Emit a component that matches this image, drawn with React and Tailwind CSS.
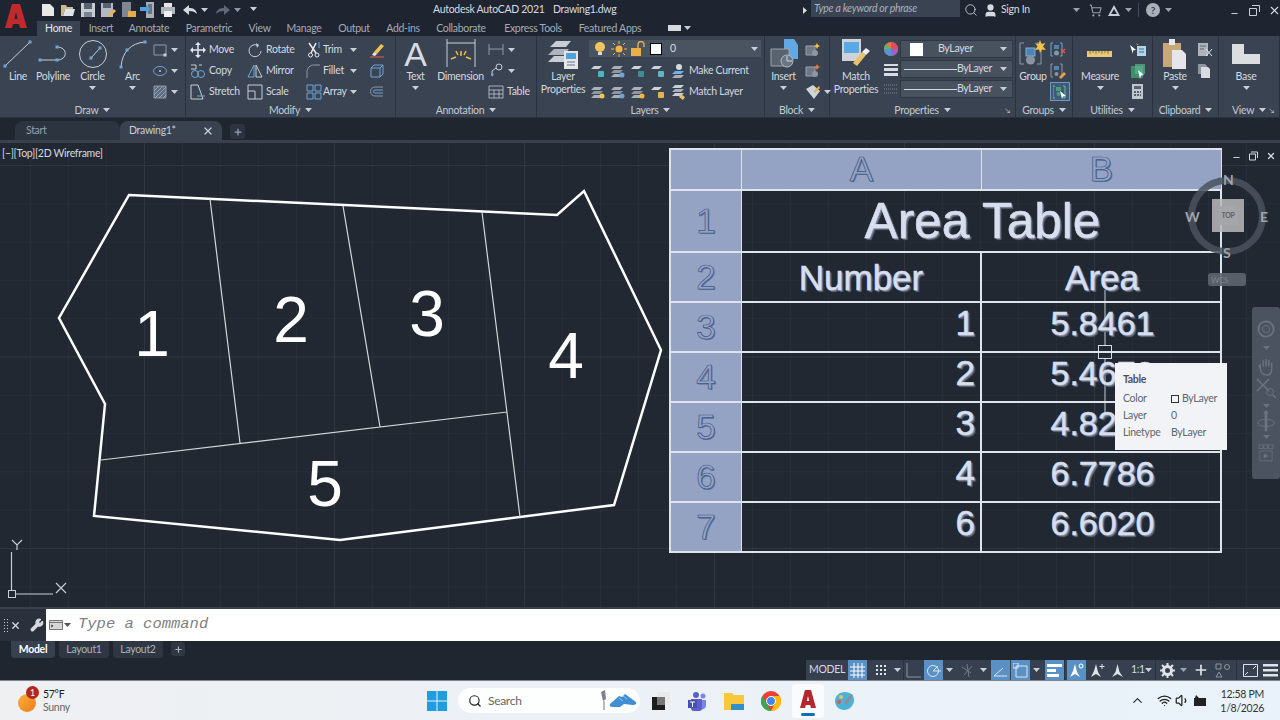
import { Search, User, ShoppingCart, Minus, X, Plus, ChevronUp, Wifi, Volume1, Wrench } from "lucide-react";

const LIGHT = "#c8cfd9";
const BLUE = "#6ea6d8";

function Svg({ w = 16, h = 16, children }) {
  return (
    <svg width={w} height={h} viewBox={`0 0 ${w} ${h}`} className="shrink-0" fill="none">
      {children}
    </svg>
  );
}

function Caret({ color = "#c8cfd9" }) {
  return (
    <svg width="7" height="4" viewBox="0 0 7 4" className="shrink-0">
      <path d="M0 0h7L3.5 4z" fill={color} />
    </svg>
  );
}

/* ---------- quick access icons ---------- */
const NewFile = () => <Svg><path d="M2 2h8l4 4v8H2z" fill="#e8e8e8" /></Svg>;
const OpenFile = () => <Svg><path d="M1 3h5l1 2h6v2H5l-2 7H1z" fill="#c9b98e" /><path d="M5 7h10l-2 7H3z" fill="#dfe3e8" /></Svg>;
const SaveFile = () => <Svg><path d="M1 1h14v14H1z" fill="#c7ccd3" /><path d="M4 1h8v6H4z" fill="#596272" /><path d="M4 10h8v5H4z" fill="#7b8492" /></Svg>;
const SaveAs = () => <Svg><path d="M1 1h12v14H1z" fill="#b4bac3" /><path d="M3 1h8v5H3z" fill="#596272" /><path d="M8 13l6-6 2 2-6 6H8z" fill="#e6b35a" /></Svg>;
const SheetOpen = () => <Svg><path d="M2 0h9v15H2z" fill="#7e8793" /><path d="M8 9h8v6H8z" fill="#e3ac4c" /></Svg>;
const SheetArrow = () => <Svg><path d="M6 0h8v16H6z" fill="#a8afb9" /><path d="M8 2h4v10H8z" fill="#6b7482" /><path d="M0 5h6V2l4 5-4 5V9H0z" fill="#4fa3dd" /></Svg>;
const PrintIcon = () => <Svg><path d="M4 1h8v4H4z" fill="#e6e6e6" /><path d="M1 5h14v7H1z" fill="#aeb5bf" /><path d="M4 9h8v6H4z" fill="#f0f0f0" /></Svg>;
const Undo = ({ color }) => <Svg w={14} h={12}><path d="M0 6l6-5v3c4 0 7 1 8 6-2-2-4-3-8-3v4z" fill={color} /></Svg>;
const Redo = ({ color }) => <Svg w={14} h={12}><path d="M14 6L8 1v3C4 4 1 5 0 10c2-2 4-3 8-3v4z" fill={color} /></Svg>;

/* ---------- draw panel ---------- */
const Dot = ({ x, y, c = BLUE }) => <rect x={x - 1.5} y={y - 1.5} width="3" height="3" fill={c} />;
const LineIcon = () => <Svg w={30} h={30}><path d="M2 27L27 3" stroke={LIGHT} /><Dot x={2} y={27} /><Dot x={27} y={3} /></Svg>;
const PolylineIcon = () => <Svg w={30} h={30}><path d="M2 21h17c11 0 11-13 0-13" stroke={LIGHT} /><Dot x={2} y={21} /><Dot x={19} y={21} /><Dot x={19} y={8} /></Svg>;
const CircleIcon = () => <Svg w={30} h={30}><circle cx="15" cy="15" r="13.5" stroke={LIGHT} /><path d="M13 19L22 9" stroke={LIGHT} /><Dot x={13} y={19} /><Dot x={22} y={9} /></Svg>;
const ArcIcon = () => <Svg w={28} h={30}><path d="M2 28C3 13 12 4 26 3" stroke={LIGHT} /><Dot x={2} y={28} /><Dot x={8} y={11} /><Dot x={26} y={3} /></Svg>;
const RectIcon = () => <Svg><path d="M2 3h12v10H2z" stroke="#8f99a6" /><Dot x={13} y={13} c={LIGHT} /></Svg>;
const EllipseIcon = () => <Svg><ellipse cx="8" cy="8" rx="6.5" ry="4.5" stroke={BLUE} /><circle cx="8" cy="8" r="1" fill={LIGHT} /></Svg>;
const HatchIcon = () => (
  <Svg>
    <path d="M2 2h12v12H2z" fill="#5b6c80" stroke="#8f99a6" />
    <path d="M2 7l5-5M2 11l9-9M3 14L14 3M7 14l7-7M11 14l3-3" stroke="#9aa6b5" />
  </Svg>
);

/* ---------- modify panel ---------- */
const MoveIcon = () => <Svg><path d="M8 1v14M1 8h14" stroke="#e4e8ee" strokeWidth="1.5" /><path d="M8 0l3 3H5zM8 16l-3-3h6zM0 8l3-3v6zM16 8l-3 3V5z" fill="#e4e8ee" /></Svg>;
const CopyIcon = () => <Svg><circle cx="5" cy="11" r="3.5" stroke={BLUE} /><circle cx="11" cy="11" r="3.5" stroke={BLUE} /><path d="M1 2h5v4H1" stroke={LIGHT} /><path d="M9 2h3" stroke={LIGHT} /></Svg>;
const StretchIcon = () => <Svg><path d="M1 1h7l5 14H1z" stroke={LIGHT} /><path d="M7 12h8" stroke={BLUE} /></Svg>;
const RotateIcon = () => <Svg><path d="M11 3.5A6 6 0 1 0 14 9" stroke={LIGHT} /><path d="M9 1l3 2-2 3z" fill={LIGHT} /></Svg>;
const MirrorIcon = () => <Svg><path d="M7 2L1 14h6z" stroke={BLUE} /><path d="M9 2l6 12H9z" stroke={LIGHT} /></Svg>;
const ScaleIcon = () => <Svg><path d="M1 1h14v14H1z" stroke={LIGHT} /><path d="M1 7h7v8" stroke={LIGHT} /></Svg>;
const TrimIcon = () => <Svg><path d="M3 1l7 10M10 1L5 11" stroke="#e4e8ee" strokeWidth="1.6" /><circle cx="4.5" cy="13" r="2" stroke="#e4e8ee" /><circle cx="11" cy="13" r="2" stroke="#e4e8ee" /><path d="M13 0v6" stroke={BLUE} /></Svg>;
const FilletIcon = () => <Svg><path d="M1 15V9c0-4 3-7 7-7h6" stroke="#8f99a6" /></Svg>;
const ArrayIcon = () => <Svg><path d="M1 1h6v6H1zM9 1h6v6H9zM1 9h6v6H1zM9 9h6v6H9z" stroke={BLUE} /></Svg>;
const EraseIcon = () => <Svg><path d="M5 10l7-8 3 2-7 8z" fill="#f0c058" /><path d="M5 10l3 2-2 2-3-1z" fill="#e6e6e6" /><path d="M1 15h14" stroke="#e0604e" /></Svg>;
const Explode = () => <Svg><path d="M2 5h9v9H2z" stroke={BLUE} /><path d="M2 5l3-3h9v9l-3 3M11 5l3-3" stroke={BLUE} /></Svg>;
const Offset = () => <Svg><path d="M14 3H6a4 4 0 0 0 0 9h8" stroke="#8f99a6" /><path d="M14 6H6a1.5 1.5 0 0 0 0 3h8" stroke={BLUE} /></Svg>;

/* ---------- annotation ---------- */
const DimensionIcon = () => (
  <Svg w={30} h={30}>
    <path d="M1 0v28M29 0v28M1 4h28" stroke={LIGHT} />
    <path d="M5 20l5-2M25 20l-5-2M15 12v5M10 12l2 4M20 12l-2 4" stroke="#e9b949" strokeWidth="1.6" />
  </Svg>
);
const LinearIcon = () => <Svg><path d="M1 2v11M15 2v11M1 7h14" stroke="#8f99a6" /></Svg>;
const LeaderIcon = () => <Svg><circle cx="11" cy="4" r="3" stroke={LIGHT} /><path d="M8 5l-4 3v5" stroke={LIGHT} /><path d="M3 10l1 4 2-3z" fill={BLUE} /></Svg>;
const TableIcon = () => <Svg><path d="M1 2h14v12H1zM1 6h14M1 10h14M6 6v8M11 6v8" stroke="#aab2bd" /></Svg>;

/* ---------- layers ---------- */
function LayerStack({ badge }) {
  return (
    <Svg w={14} h={14}>
      <path d="M3 2h9L9 5H0z" fill="#a9b0ba" />
      <path d="M3 6h9L9 9H0z" fill="#8d96a2" />
      <path d="M3 10h9l-3 3H0z" fill="#a9b0ba" />
      {badge && <circle cx="11" cy="11" r="2.5" fill={badge} />}
    </Svg>
  );
}
function LayerFlat({ badge }) {
  return (
    <Svg w={14} h={14}>
      <path d="M3 2h8L8 5H0z" fill="#cfd4da" />
      <rect x="7" y="7" width="6" height="6" rx="1" fill={badge} />
    </Svg>
  );
}
const LayerPropsIcon = () => (
  <Svg w={32} h={30}>
    <path d="M9 2h15l-5 6H3z" fill="#c9ced5" />
    <path d="M7 10h15l-5 6H1z" fill="#aeb4bd" />
    <path d="M7 17h15l-5 6H1z" fill="#c9ced5" />
    <path d="M17 12h14v18H17z" fill="#e4e6ea" />
    <path d="M19 14h10v6H19z" fill="#4fa3dd" />
    <path d="M20 23h8M20 26h8" stroke="#6b7482" />
  </Svg>
);
const Bulb = () => <Svg><circle cx="8" cy="6" r="5" fill="#f2c65a" /><path d="M6 11h4v3H6z" fill="#d9d9d9" /></Svg>;
const Sun = () => <Svg><circle cx="8" cy="8" r="3.5" fill="#f2b844" /><path d="M8 0v3M8 13v3M0 8h3M13 8h3M2 2l2 2M12 12l2 2M14 2l-2 2M2 14l2-2" stroke="#f2b844" /></Svg>;
const Lock = () => <Svg><rect x="1" y="7" width="10" height="8" fill="#e9b04a" /><path d="M8 7V3.5a3 3 0 0 1 6 0V6" stroke="#e9b04a" strokeWidth="1.4" /></Svg>;
const MakeCurrent = () => <Svg><path d="M4 8h9l-3 3H1z" fill="#6fb2e3" /><path d="M4 12h9l-3 3H1z" fill="#a9b0ba" /><circle cx="8" cy="4" r="3" fill="#d6dae0" /></Svg>;
const MatchLayer = () => <Svg><path d="M4 1h9l-3 3H1z" fill="#c9ced5" /><path d="M4 5h9l-3 3H1z" fill="#a9b0ba" /><path d="M4 9h9l-3 3H1z" fill="#c9ced5" /><path d="M10 10l4 3-2 3-4-3z" fill="#e9c26a" /></Svg>;

/* ---------- block ---------- */
const InsertIcon = () => (
  <Svg w={28} h={30}>
    <path d="M14 0h10l4 6v14H14z" fill="#62a9e4" />
    <path d="M1 10h18v17H1z" fill="#59626f" stroke="#9aa2ad" />
    <circle cx="17" cy="22" r="6" fill="#6b7482" stroke="#b5bcc6" />
    <path d="M17 22v-5M17 22h5" stroke="#cfd4da" />
  </Svg>
);
const BlockSmall = ({ accent }) => <Svg><path d="M1 4h9v9H1z" fill="#6f7886" stroke="#9aa2ad" /><circle cx="10" cy="11" r="3" fill="#8d96a2" /><path d="M12 1l1 2 2 1-2 1-1 2-1-2-2-1 2-1z" fill={accent} /></Svg>;
const BlockEdit = () => <Svg><path d="M1 5l7-4 7 6-6 8z" fill="#cfd4da" /><path d="M9 7l5-5 1 2-5 5z" fill="#e9b04a" /></Svg>;

/* ---------- properties ---------- */
const MatchPropsIcon = () => (
  <Svg w={30} h={30}>
    <path d="M1 0h19v22H1z" fill="#cfd3d9" />
    <path d="M3 3h15v11H3z" fill="#5aa9e6" />
    <path d="M12 24l9-11 4 3-9 11z" fill="#e9c26a" />
    <path d="M21 13l4-4 4 3-4 4z" fill="#f0f0f0" />
  </Svg>
);
const ColorWheel = () => (
  <svg width="14" height="14" viewBox="0 0 14 14" className="shrink-0">
    <circle cx="7" cy="7" r="7" fill="#e8763a" />
    <path d="M7 7V0a7 7 0 0 1 7 7z" fill="#e24a5f" />
    <path d="M7 7h7a7 7 0 0 1-7 7z" fill="#9a63c9" />
    <path d="M7 7v7a7 7 0 0 1-7-7z" fill="#4a9ad9" />
    <path d="M7 7H0a7 7 0 0 1 2-5z" fill="#58b56c" />
  </svg>
);
const LineweightIcon = () => <Svg w={14} h={14}><path d="M0 2h14v2H0zM0 6h14v3H0zM0 11h14v3H0z" fill="#d8dce2" /></Svg>;
const LinetypeIcon = () => <Svg w={14} h={14}><path d="M0 3h14M0 7h14M0 11h14" stroke="#7d8692" strokeDasharray="1 1" /></Svg>;

/* ---------- groups / utilities / clipboard ---------- */
const GroupIcon = () => (
  <Svg w={28} h={28}>
    <path d="M5 3H1v21h4M18 3h4v21h-4" stroke="#8f99a6" />
    <rect x="7" y="8" width="9" height="8" fill="#4f83b4" stroke="#7fb0dc" />
    <circle cx="11.5" cy="20" r="4.5" fill="#8a93a0" />
    <path d="M21 0l1.5 4 4-1-2.5 3.5L27 10l-4-.5L21 13l-1-3.5-4 .5 2.5-3.5L16 3l3.5 1z" fill="#f4c04e" />
  </Svg>
);
const UngroupIcon = () => <Svg><path d="M3 1H1v13h2M10 1h2v13h-2" stroke={BLUE} /><rect x="4" y="3" width="5" height="4" fill="#4f83b4" /><circle cx="6.5" cy="11" r="2.5" fill="#8a93a0" /><path d="M11 7l4 4M15 7l-4 4" stroke="#e0574e" strokeWidth="1.5" /></Svg>;
const GroupEdit = () => <Svg><path d="M3 1H1v13h2M10 1h2v13h-2" stroke="#8f99a6" /><rect x="4" y="3" width="5" height="4" fill="#4f83b4" /><circle cx="6.5" cy="11" r="2" fill="#8a93a0" /><path d="M9 14l5-5 2 2-5 5z" fill="#e9a04a" /></Svg>;
const GroupSelect = () => (
  <div className="w-[20px] h-[19px] flex items-center justify-center border border-[#6c9cc4] bg-[#3d5c78]">
    <Svg w={14} h={14}>
      <path d="M2 1H0v12h2M10 1h2v12h-2" stroke="#7fb08f" />
      <rect x="3" y="2" width="5" height="4" fill="#4f9a78" />
      <circle cx="5.5" cy="9" r="2" fill="#4f9a78" />
      <path d="M7 6l6 5-3 .5L9 14z" fill="#fff" />
    </Svg>
  </div>
);
const MeasureIcon = () => <Svg w={26} h={8}><path d="M0 1h25v6H0z" fill="#e9c878" /><path d="M3 1v3M6 1v2M9 1v3M12 1v2M15 1v3M18 1v2M21 1v3" stroke="#8b7433" /></Svg>;
const QuickSelect = () => <Svg><path d="M7 4h9v10H7z" fill="#b7d3ea" /><path d="M9 7h5M9 10h5" stroke="#3e6d92" /><path d="M0 3l6 5-3 .5L3 12z" fill="#fff" /><path d="M6 0l1 2 2 .5-2 .5z" fill="#f4c04e" /></Svg>;
const SelectGreen = () => <Svg><path d="M1 3h12v12H1z" fill="#3e8e6b" /><path d="M5 1h10v10H5z" fill="#5cb58e" opacity=".7" /><path d="M8 7l6 5-3 .5L10 16z" fill="#fff" /></Svg>;
const CalcIcon = () => <Svg w={12} h={16}><path d="M0 0h11v15H0z" fill="#c2c7ce" /><path d="M2 2h7v3H2z" fill="#59626f" /><path d="M2 7h2v2H2zM5 7h2v2H5zM8 7h1v2H8zM2 10h2v2H2zM5 10h2v2H5zM8 10h1v2H8z" fill="#59626f" /></Svg>;
const PasteIcon = () => (
  <Svg w={24} h={30}>
    <path d="M0 4h18v24H0z" fill="#c8a878" />
    <path d="M6 0h6v6H6z" fill="#e8e8e8" />
    <path d="M9 11h10l4 4v15H9z" fill="#e4e6ea" />
  </Svg>
);
const CutIcon = () => <Svg><path d="M1 1h10v13H1z" fill="#aeb4bd" /><path d="M3 4h6M3 7h4" stroke="#59626f" /><path d="M9 7l6 7M15 7l-6 7" stroke="#e4e8ee" /></Svg>;
const CopyClip = () => <Svg w={14} h={16}><path d="M1 1h7l2 2v8H1z" fill="#8d96a2" /><path d="M4 4h7l2 2v9H4z" fill="#d8dce2" /></Svg>;
const BaseIcon = () => <Svg w={28} h={20}><path d="M0 0h12v10h16v10H0z" fill="#dcdde0" /></Svg>;

/* ---------- ribbon building blocks ---------- */
function Panel({ className, label, expand, children }) {
  return (
    <div className={`${className} shrink-0 h-full flex flex-col border-r border-[#2b323d]`}>
      <div className="flex-1 flex min-h-0">{children}</div>
      <div className="h-[14px] flex items-center justify-center gap-[5px] text-[10.5px] leading-none text-[#c3cad3] relative">
        <span>{label}</span>
        <Caret />
        {expand && (
          <span className="absolute right-[5px] top-[4px] text-[7px] leading-none text-[#c3cad3]">↘</span>
        )}
      </div>
    </div>
  );
}

function Large({ className, icon, label, label2, caret }) {
  return (
    <div className={`${className} shrink-0 flex flex-col items-center pt-[2px]`}>
      <div className="h-[31px] flex items-center justify-center">{icon}</div>
      <div className="text-[10.5px] leading-[13px] text-center text-[#d4d9e0] whitespace-nowrap mt-[1px]">
        {label}
        {label2 && <div>{label2}</div>}
      </div>
      {caret && <div className="mt-[3px]"><Caret /></div>}
    </div>
  );
}

function Col({ className = "", children }) {
  return <div className={`${className} shrink-0 flex flex-col pt-[3px]`}>{children}</div>;
}

function Row({ icon, label, caret, className = "", gap = "gap-[3px]" }) {
  return (
    <div className={`${className} ${gap} h-[21px] flex items-center text-[10.5px] text-[#d4d9e0] whitespace-nowrap`}>
      {icon}
      {label && <span>{label}</span>}
      {caret && <span className="ml-auto"><Caret /></span>}
    </div>
  );
}

function Combo({ swatch, line, label }) {
  return (
    <div className="w-[113px] h-[18px] mb-[2px] flex items-center bg-[#48525f] border border-[#2f3742] pr-[5px] text-[10.5px] text-[#d4d9e0]">
      {swatch && <span className="ml-[9px] mr-[8px] w-[13px] h-[13px] bg-white" />}
      {line && <span className="ml-[3px] w-[53px] h-[1px] bg-[#d4d9e0]" />}
      {swatch && <span className="ml-[7px]">{label}</span>}
      {line && <span>{label}</span>}
      <span className="ml-auto"><Caret /></span>
    </div>
  );
}

function Ribbon() {
  return (
    <div className="h-[82px] flex bg-[#3a4351] border-b border-[#2b323d]">
      <Panel className="w-[186px]" label="Draw">
        <Large className="w-[36px]" icon={<LineIcon />} label="Line" />
        <Large className="w-[34px]" icon={<PolylineIcon />} label="Polyline" />
        <Large className="w-[45px]" icon={<CircleIcon />} label="Circle" caret />
        <Large className="w-[35px]" icon={<ArcIcon />} label="Arc" caret />
        <Col className="w-[28px] pl-[2px]">
          <Row icon={<RectIcon />} caret />
          <Row icon={<EllipseIcon />} caret />
          <Row icon={<HatchIcon />} caret />
        </Col>
      </Panel>
      <Panel className="w-[210px]" label="Modify">
        <Col className="w-[61px] pl-[4px]">
          <Row icon={<MoveIcon />} label="Move" />
          <Row icon={<CopyIcon />} label="Copy" />
          <Row icon={<StretchIcon />} label="Stretch" />
        </Col>
        <Col className="w-[59px]">
          <Row icon={<RotateIcon />} label="Rotate" />
          <Row icon={<MirrorIcon />} label="Mirror" />
          <Row icon={<ScaleIcon />} label="Scale" />
        </Col>
        <Col className="w-[51px]">
          <Row gap="gap-[1px]" icon={<TrimIcon />} label="Trim" caret />
          <Row gap="gap-[1px]" icon={<FilletIcon />} label="Fillet" caret />
          <Row gap="gap-[1px]" icon={<ArrayIcon />} label="Array" caret />
        </Col>
        <Col className="pl-[12px]">
          <Row icon={<EraseIcon />} />
          <Row icon={<Explode />} />
          <Row icon={<Offset />} />
        </Col>
      </Panel>
      <Panel className="w-[141px]" label="Annotation">
        <Large className="w-[39px]" icon={<span className="text-[34px] leading-none text-[#d8dce2] font-['Liberation_Sans']">A</span>} label="Text" caret />
        <Large className="w-[51px]" icon={<DimensionIcon />} label="Dimension" />
        <Col className="w-[46px] pl-[2px]">
          <Row className="w-[27px]" icon={<LinearIcon />} caret />
          <Row className="w-[27px]" icon={<LeaderIcon />} caret />
          <Row icon={<TableIcon />} label="Table" />
        </Col>
      </Panel>
      <Panel className="w-[228px]" label="Layers">
        <Large className="w-[52px]" icon={<LayerPropsIcon />} label="Layer" label2="Properties" />
        <div className="flex flex-col pt-[4px] w-[172px]">
          <div className="h-[17px] flex items-center gap-[3px] bg-[#4a5461] pl-[3px] pr-[3px] text-[10.5px] text-[#d4d9e0]">
            <Bulb />
            <Sun />
            <Lock />
            <span className="ml-[1px] w-[12px] h-[12px] bg-white border border-black" />
            <span className="ml-[5px]">0</span>
            <span className="ml-auto"><Caret /></span>
          </div>
          <div className="h-[21px] mt-[3px] flex items-center gap-[6px] text-[10.5px] text-[#d4d9e0] pl-[2px] whitespace-nowrap">
            <LayerFlat badge="#4fb3c4" />
            <LayerStack badge="#6ea6d8" />
            <LayerFlat badge="#3d8f96" />
            <LayerFlat badge="#5bb6c8" />
            <span className="flex items-center gap-[2px]"><MakeCurrent />Make Current</span>
          </div>
          <div className="h-[21px] flex items-center gap-[6px] text-[10.5px] text-[#d4d9e0] pl-[2px] whitespace-nowrap">
            <LayerStack badge="#f2c65a" />
            <LayerStack badge="#6ea6d8" />
            <LayerStack badge="#f2b844" />
            <LayerFlat badge="#e9b04a" />
            <span className="flex items-center gap-[2px]"><MatchLayer />Match Layer</span>
          </div>
        </div>
      </Panel>
      <Panel className="w-[65px]" label="Block">
        <Large className="w-[37px]" icon={<InsertIcon />} label="Insert" caret />
        <Col className="w-[26px] pl-[3px]">
          <Row icon={<BlockSmall accent="#f4c04e" />} />
          <Row icon={<BlockSmall accent="#e9804a" />} />
          <Row icon={<BlockEdit />} caret />
        </Col>
      </Panel>
      <Panel className="w-[186px]" label="Properties" expand>
        <Large className="w-[52px]" icon={<MatchPropsIcon />} label="Match" label2="Properties" />
        <div className="w-[17px] flex flex-col items-center pt-[6px] gap-[6px]">
          <ColorWheel />
          <LineweightIcon />
          <LinetypeIcon />
        </div>
        <div className="pt-[4px] pl-[1px]">
          <Combo swatch label="ByLayer" />
          <Combo line label="ByLayer" />
          <Combo line label="ByLayer" />
        </div>
      </Panel>
      <Panel className="w-[57px]" label="Groups">
        <Large className="w-[34px]" icon={<GroupIcon />} label="Group" />
        <Col>
          <Row icon={<UngroupIcon />} />
          <Row icon={<GroupEdit />} />
          <Row icon={<GroupSelect />} />
        </Col>
      </Panel>
      <Panel className="w-[80px]" label="Utilities">
        <Large className="w-[54px]" icon={<MeasureIcon />} label="Measure" caret />
        <Col className="items-center w-[22px]">
          <Row icon={<QuickSelect />} />
          <Row icon={<SelectGreen />} />
          <Row icon={<CalcIcon />} />
        </Col>
      </Panel>
      <Panel className="w-[66px]" label="Clipboard">
        <Large className="w-[44px]" icon={<PasteIcon />} label="Paste" caret />
        <Col>
          <Row icon={<CutIcon />} />
          <Row icon={<CopyClip />} />
        </Col>
      </Panel>
      <Panel className="flex-1" label="View" expand>
        <Large className="w-[52px] ml-[1px]" icon={<BaseIcon />} label="Base" caret />
      </Panel>
    </div>
  );
}

const tabs = [
  ["Home", "w-[43px]"],
  ["Insert", "w-[42px]"],
  ["Annotate", "w-[54px]"],
  ["Parametric", "w-[66px]"],
  ["View", "w-[35px]"],
  ["Manage", "w-[54px]"],
  ["Output", "w-[46px]"],
  ["Add-ins", "w-[52px]"],
  ["Collaborate", "w-[64px]"],
  ["Express Tools", "w-[80px]"],
  ["Featured Apps", "w-[74px]"],
];

function TitleBar() {
  return (
    <div className="h-[36px] flex bg-[#1e2530]">
      <div className="w-[37px] shrink-0 pl-[5px] pt-[4px]">
        <svg width="22" height="24" viewBox="0 0 22 24">
          <path d="M7 0h8l7 24h-7l-1-4H8l-1 4H0zM9.5 15h3L11 8z" fill="#bf2a2c" fillRule="evenodd" />
        </svg>
      </div>
      <div className="flex-1 flex flex-col min-w-0">
        <div className="h-[20px] flex items-center text-[10.5px] text-[#d6dae0] whitespace-nowrap">
          <div className="w-[396px] shrink-0 flex items-center gap-[4px] pl-[3px]">
            <NewFile /><OpenFile /><SaveFile /><SaveAs /><SheetOpen /><SheetArrow /><PrintIcon />
            <span className="ml-[3px]"><Undo color="#d6dae0" /></span>
            <Caret />
            <span className="ml-[4px]"><Redo color="#5f6875" /></span>
            <Caret color="#8f99a6" />
            <span className="ml-[5px] mt-[-2px]"><Caret /></span>
          </div>
          <span className="w-[120px] shrink-0">Autodesk AutoCAD 2021</span>
          <span className="w-[250px] shrink-0">Drawing1.dwg</span>
          <svg width="4" height="7" viewBox="0 0 4 7" className="shrink-0"><path d="M0 0l4 3.5L0 7z" fill="#d6dae0" /></svg>
          <div className="ml-[4px] w-[149px] h-[17px] mt-[-3px] bg-[#3a4351] flex items-center pl-[3px] italic text-[#aab2bd] text-[10.5px] shrink-0">
            Type a keyword or phrase
          </div>
          <Search size={14} strokeWidth={1.5} color="#c8cfd9" className="ml-[4px] shrink-0" />
          <User size={15} color="#d6dae0" fill="#d6dae0" className="ml-[5px] shrink-0" />
          <span className="ml-[3px] w-[72px] shrink-0">Sign In</span>
          <Caret color="#9aa2ad" />
          <ShoppingCart size={13} color="#9aa2ad" className="ml-[9px] shrink-0" />
          <svg width="14" height="13" viewBox="0 0 14 13" className="ml-[5px] shrink-0">
            <path d="M7 1L13 12H1zM7 5L4 10h6z" fill="#c8cfd9" fillRule="evenodd" />
          </svg>
          <span className="ml-[4px]"><Caret color="#9aa2ad" /></span>
          <span className="ml-[6px] h-[14px] w-px bg-[#434c59] shrink-0" />
          <span className="ml-[7px] w-[14px] h-[14px] rounded-full bg-[#a9b0ba] text-[#3a4351] text-[10px] font-bold flex items-center justify-center shrink-0">?</span>
          <span className="ml-[5px]"><Caret color="#9aa2ad" /></span>
          <Minus size={9} strokeWidth={3} color="#c8cfd9" className="ml-[58px] mt-[6px] shrink-0" />
          <svg width="11" height="11" viewBox="0 0 11 11" className="ml-[10px] shrink-0">
            <path d="M3 .5h7.5V7M.5 3.5h7v7h-7z" stroke="#c8cfd9" fill="none" />
          </svg>
          <X size={13} strokeWidth={2} color="#d6dae0" className="ml-[8px] shrink-0" />
        </div>
        <div className="h-[16px] flex items-end text-[10.5px] text-[#a4acb7]">
          {tabs.map(([name, width], i) => (
            <div
              key={name}
              className={`${width} h-[15px] shrink-0 flex items-center justify-center whitespace-nowrap ${i === 0 ? "bg-[#3a4351] text-[#e6e9ed]" : ""}`}
            >
              {name}
            </div>
          ))}
          <div className="ml-[21px] self-center flex items-center gap-[3px]">
            <span className="w-[13px] h-[6px] bg-[#d6dae0]" />
            <Caret />
          </div>
        </div>
      </div>
    </div>
  );
}

function DocTabs() {
  return (
    <div className="h-[22px] flex items-end bg-[#1f2630] pl-[15px] text-[10.5px]">
      <div className="w-[105px] h-[19px] rounded-t-[8px] bg-[#2c3440] text-[#98a1ad] flex items-center pl-[11px]">Start</div>
      <div className="w-[102px] h-[19px] rounded-t-[8px] bg-[#39424f] text-[#c8cfd9] flex items-center pl-[9px]">
        Drawing1*
        <X size={12} strokeWidth={2.5} color="#c8cfd9" className="ml-auto mr-[8px]" />
      </div>
      <div className="ml-[8px] w-[15px] h-[15px] mb-[1px] rounded-[3px] bg-[#2c3440] flex items-center justify-center">
        <Plus size={10} strokeWidth={3} color="#98a1ad" />
      </div>
    </div>
  );
}

const areaRows = [
  ["3", "1", "5.8461"],
  ["4", "2", "5.4678"],
  ["5", "3", "4.8231"],
  ["6", "4", "6.7786"],
  ["7", "6", "6.6020"],
];

const headCell = "flex items-center justify-center bg-[#94a3c4] border-r border-b-2 border-[#dfe4ec] text-[#94a3c4] font-['Liberation_Sans'] text-[35px] [-webkit-text-stroke:0.7px_#3f5688] [text-shadow:1px_1px_0_#5a7099]";
const bodyText = "text-[#d7deee] font-['Liberation_Sans'] [-webkit-text-stroke:0.5px_#d7deee] [text-shadow:1px_1px_1px_#8a93a8,2px_2px_1px_#5c6374]";

function AreaTable() {
  return (
    <div className="absolute left-[669px] top-[5px] w-[553px] h-[405px] grid grid-cols-[71px_240px_240px] grid-rows-[41px_62px_50px_50px_50px_50px_50px_50px] border-t-2 border-l-2 border-[#dfe4ec] tracking-normal">
      <div className={headCell} />
      <div className={headCell}>A</div>
      <div className={headCell}>B</div>
      <div className={headCell}>1</div>
      <div className={`col-span-2 flex items-center justify-center pl-[3px] border-r-2 border-b-2 border-[#dfe4ec] text-[49.5px] ${bodyText}`}>Area Table</div>
      <div className={headCell}>2</div>
      <div className={`flex items-center justify-center pt-[2px] border-r-2 border-b-2 border-[#dfe4ec] text-[35px] ${bodyText}`}>Number</div>
      <div className={`flex items-center justify-center pt-[2px] pl-[2px] border-r-2 border-b-2 border-[#dfe4ec] text-[35px] ${bodyText}`}>Area</div>
      {areaRows.map(([row, number, area]) => (
        <div key={row} className="contents">
          <div className={headCell}>{row}</div>
          <div className={`flex items-center justify-end pr-[5px] pb-[7px] border-r-2 border-b-2 border-[#dfe4ec] text-[35px] ${bodyText}`}>{number}</div>
          <div className={`flex items-center justify-center pl-[3px] pb-[7px] border-r-2 border-b-2 border-[#dfe4ec] text-[34px] ${bodyText}`}>{area}</div>
        </div>
      ))}
    </div>
  );
}

function Drawing() {
  return (
    <svg width="1280" height="464" viewBox="0 143 1280 464" className="absolute left-0 top-0" fill="none">
      <path d="M129 195L557 215L584 191L661 350L614 505L340 540L94 516L105 404L59 318Z" stroke="#fff" strokeWidth="2.5" />
      <path d="M210 199L240 443M343 206L380 427M482 212L520 517M101 460L507 412" stroke="#d4d6da" strokeWidth="1.2" />
      <g fill="#fff" fontFamily="Liberation Sans" fontSize="64" textAnchor="middle">
        <text x="152" y="356">1</text>
        <text x="291" y="342">2</text>
        <text x="427" y="336">3</text>
        <text x="566" y="378">4</text>
        <text x="325" y="506">5</text>
      </g>
      {/* ucs icon */}
      <path d="M11.5 552V590M16 594H53M12 540l5 5 5-5M17 545v5M56 583l10 10M66 583l-10 10" stroke="#c8cdd4" strokeWidth="1.2" />
      <rect x="8.5" y="590.5" width="7" height="7" stroke="#c8cdd4" />
      {/* crosshair */}
      <path d="M1105 290V345M1105 358V415M1029 352H1098M1111 352H1181" stroke="#c8cdd4" />
      <rect x="1098.5" y="345.5" width="13" height="13" stroke="#d8dce2" />
    </svg>
  );
}

function ViewCube() {
  const letter = "absolute font-bold text-[14px] leading-none text-[#a0a4aa]";
  return (
    <div className="absolute left-[1187px] top-[28px] w-[80px] h-[150px]">
      <div className="absolute left-[1px] top-[6px] w-[78px] h-[78px] rounded-full border-[7px] border-[#4a525e]/85" />
      <div className="absolute left-[25px] top-[28px] w-[32px] h-[33px] bg-[#b7b9bc]/85 flex items-center justify-center">
        <span className="w-[19px] h-[19px] bg-[#a4a6aa] flex items-center justify-center text-[7px] font-bold text-[#5d6168]">TOP</span>
      </div>
      <span className={`${letter} left-[36px] top-[2px]`}>N</span>
      <span className={`${letter} left-[36px] top-[75px]`}>S</span>
      <span className={`${letter} left-[73px] top-[39px]`}>E</span>
      <span className={`${letter} left-[-2px] top-[39px]`}>W</span>
      <div className="absolute left-[21px] top-[102px] w-[38px] h-[13px] rounded-[3px] bg-[#5e6570]/90 flex items-center pl-[3px] text-[8px] text-[#7d838c]">WCS</div>
    </div>
  );
}

function NavBar() {
  const c = "#6b7380";
  return (
    <div className="absolute left-[1252px] top-[164px] w-[28px] h-[172px] rounded-[3px] bg-[#4b5360] flex flex-col items-center pt-[13px]">
      <svg width="18" height="18" viewBox="0 0 20 20" fill="none">
        <circle cx="10" cy="10" r="8.5" stroke={c} strokeWidth="2" />
        <circle cx="10" cy="10" r="4" stroke={c} />
      </svg>
      <div className="mt-[8px]"><Caret color={c} /></div>
      <svg width="20" height="19" viewBox="0 0 20 20" fill="none" className="mt-[7px]">
        <path d="M4 11V7M7 10V3M10 10V2M13 10V3M16 12V6M4 11c0 5 3 8 7 8s5-3 5-7M4 11l-2-2" stroke={c} strokeWidth="1.5" />
      </svg>
      <svg width="22" height="20" viewBox="0 0 22 20" fill="none" className="mt-[2px]">
        <path d="M2 1l12 12M14 1L2 13" stroke={c} strokeWidth="1.5" />
        <circle cx="15" cy="14" r="3.5" stroke={c} />
        <path d="M18 17l3 3" stroke={c} strokeWidth="1.5" />
      </svg>
      <div className="mt-[6px]"><Caret color={c} /></div>
      <svg width="20" height="22" viewBox="0 0 20 24" fill="none" className="mt-[2px]">
        <ellipse cx="10" cy="14" rx="9" ry="4" stroke={c} />
        <path d="M10 1v22" stroke={c} strokeWidth="3" />
        <path d="M10 0l3 4H7z" fill={c} />
      </svg>
      <div className="mt-[3px]"><Caret color={c} /></div>
      <svg width="20" height="20" viewBox="0 0 20 26" fill="none" className="mt-[5px]">
        <path d="M1 1h5v5H1zM7 1h5v5H7zM13 1h6v5h-6zM2 9h16v13H2z" stroke={c} />
        <path d="M7 12l6 3.5-6 3.5z" fill={c} />
      </svg>
    </div>
  );
}

function Tooltip() {
  return (
    <div className="absolute left-[1115px] top-[220px] w-[112px] h-[87px] bg-[#f1f3f7] text-[10.5px] text-[#5f6670] px-[8px] pt-[8px]">
      <div className="font-bold text-[#4b525c] leading-[16px] mb-[3px]">Table</div>
      <div className="grid grid-cols-[48px_1fr] leading-[17px]">
        <span>Color</span>
        <span className="flex items-center gap-[3px]"><span className="w-[8px] h-[8px] border border-[#333]" />ByLayer</span>
        <span>Layer</span>
        <span>0</span>
        <span>Linetype</span>
        <span>ByLayer</span>
      </div>
    </div>
  );
}

function Canvas() {
  return (
    <div className="relative h-[464px] overflow-hidden bg-[#212831] [background-image:linear-gradient(to_right,#2f3641_1px,transparent_1px),linear-gradient(to_bottom,#2f3641_1px,transparent_1px),linear-gradient(to_right,#272e38_1px,transparent_1px),linear-gradient(to_bottom,#272e38_1px,transparent_1px)] [background-size:190px_191.5px,190px_191.5px,38px_38.3px,38px_38.3px] [background-position:144px_22px,144px_22px,30px_22px,30px_22px]">
      <Drawing />
      <AreaTable />
      <ViewCube />
      <NavBar />
      <Tooltip />
      <span className="absolute left-[2px] top-[4px] text-[10.5px] leading-[13px] text-[#d6dae0]">[−][Top][2D Wireframe]</span>
      <div className="absolute left-[1232px] top-[7px] flex items-center gap-[8px]">
        <Minus size={9} strokeWidth={3} color="#c8cfd9" className="mt-[3px]" />
        <svg width="9" height="10" viewBox="0 0 9 10" fill="none"><path d="M2 1h6.5v6M.5 3h6v6h-6z" stroke="#d6dae0" /></svg>
        <X size={10} strokeWidth={3} color="#d6dae0" />
      </div>
    </div>
  );
}

function CommandLine() {
  return (
    <div className="h-[34px] flex border-t-2 border-[#39414d] bg-[#2a313c]">
      <div className="w-[46px] shrink-0 flex items-center pl-[3px]">
        <span className="w-[5px] h-[15px] [background-image:radial-gradient(#c8cfd9_1px,transparent_1px)] [background-size:3px_3px]" />
        <X size={11} strokeWidth={3} color="#d6dae0" className="ml-[2px]" />
        <Wrench size={14} color="#d6dae0" fill="#d6dae0" className="ml-[9px]" />
      </div>
      <div className="flex-1 bg-white flex items-center pl-[3px]">
        <svg width="14" height="10" viewBox="0 0 14 10" fill="none">
          <path d="M.5.5h13v9H.5z" fill="#d6d6d6" stroke="#777" />
          <path d="M.5 2.5h13" stroke="#777" />
          <path d="M2 5l2 1-2 1" stroke="#444" />
        </svg>
        <span className="ml-[1px] mr-[7px]"><Caret color="#555" /></span>
        <span className="font-['Liberation_Mono'] italic text-[15.5px] tracking-normal text-[#808080]">Type a command</span>
      </div>
    </div>
  );
}

function LayoutTabs() {
  const base = "h-[17px] rounded-b-[4px] flex items-center justify-center bg-[#2f3743] text-[#aab2bd]";
  return (
    <div className="h-[19px] flex items-start bg-[#1f2630] pl-[11px] text-[10.5px] gap-[4px]">
      <div className="w-[44px] h-[17px] rounded-b-[4px] flex items-center justify-center bg-[#36404e] text-white font-bold">Model</div>
      <div className={`${base} w-[50px]`}>Layout1</div>
      <div className={`${base} w-[50px]`}>Layout2</div>
      <div className="ml-[4px] w-[14px] h-[14px] mt-[1px] rounded-[3px] flex items-center justify-center bg-[#2f3743]">
        <Plus size={9} strokeWidth={3} color="#aab2bd" />
      </div>
    </div>
  );
}

function Toggle({ on, children, className = "" }) {
  return (
    <div className={`${className} w-[19px] h-[20px] shrink-0 flex items-center justify-center ${on ? "bg-[#5b90c4]" : ""}`}>
      {children}
    </div>
  );
}

function StatusBar() {
  const s = "#dfe4ea";
  const d = "#8d96a2";
  return (
    <div className="h-[20px] flex justify-end bg-[#1f2630]">
      <div className="w-[474px] h-full flex items-center bg-[#36404e] text-[10.5px] text-[#d6dae0]">
        <span className="ml-[3px] w-[39px]">MODEL</span>
        <Toggle on>
          <svg width="15" height="15" viewBox="0 0 15 15"><path d="M4 0v15M8 0v15M12 0v15M0 4h15M0 8h15M0 12h15" stroke="#fff" /></svg>
        </Toggle>
        <Toggle className="ml-[5px]">
          <svg width="11" height="11" viewBox="0 0 11 11"><path d="M0 0h2v2H0zM4 0h2v2H4zM8 0h2v2H8zM0 4h2v2H0zM4 4h2v2H4zM8 4h2v2H8zM0 8h2v2H0zM4 8h2v2H4zM8 8h2v2H8z" fill={s} /></svg>
        </Toggle>
        <span className="ml-[3px] mr-[2px]"><Caret /></span>
        <span className="w-px h-[20px] bg-[#2b323d]" />
        <svg width="15" height="15" viewBox="0 0 15 15" fill="none" className="ml-[2px] mr-[3px] shrink-0"><path d="M1 0v14h14" stroke={d} /></svg>
        <Toggle on>
          <svg width="15" height="15" viewBox="0 0 15 15" fill="none"><circle cx="7" cy="8" r="5.5" stroke="#dbe8f4" /><path d="M7 8h8M7 8l5-5" stroke="#dbe8f4" /></svg>
        </Toggle>
        <span className="ml-[3px]"><Caret /></span>
        <svg width="15" height="15" viewBox="0 0 15 15" fill="none" className="ml-[7px] shrink-0"><path d="M7 1l2 13M2 4l9 6M12 3l-8 9" stroke="#737c88" /></svg>
        <span className="ml-[5px] mr-[4px]"><Caret /></span>
        <Toggle on>
          <svg width="15" height="15" viewBox="0 0 15 15" fill="none"><path d="M1 13h13M1 13l9-8" stroke="#dbe8f4" /></svg>
        </Toggle>
        <Toggle on className="ml-[1px]">
          <svg width="15" height="15" viewBox="0 0 15 15" fill="none"><path d="M3 3h11v11H3z" stroke="#dbe8f4" /><path d="M0 0h5v5H0z" stroke="#dbe8f4" /></svg>
        </Toggle>
        <span className="ml-[3px] mr-[5px]"><Caret /></span>
        <Toggle on>
          <svg width="15" height="13" viewBox="0 0 15 13"><path d="M0 0h15v3H0zM0 5h9v3H0zM0 10h12v3H0z" fill="#fff" /></svg>
        </Toggle>
        <span className="w-[3px] h-[20px] border-l border-[#2b323d] shrink-0" />
        <Toggle on>
          <svg width="15" height="15" viewBox="0 0 15 15"><path d="M6 1l2 8 3 5-5-3-5 3 3-6z" fill="#fff" /><circle cx="12" cy="3" r="2" fill="none" stroke="#fff" /></svg>
        </Toggle>
        <svg width="15" height="15" viewBox="0 0 15 15" className="ml-[4px] shrink-0"><path d="M6 1l2 8 3 5-5-3-5 3 3-6z" fill={s} /><path d="M12 1v5M9.5 3.5h5" stroke={s} /></svg>
        <svg width="15" height="15" viewBox="0 0 15 15" className="ml-[5px] shrink-0"><path d="M7.5 1l2 8 3.5 5-5.5-3-5.5 3 3.5-5z" fill={s} /></svg>
        <span className="ml-[6px] text-[10.5px] w-[14px] shrink-0 whitespace-nowrap">1:1</span>
        <Caret />
        <span className="ml-[3px] w-px h-[20px] bg-[#2b323d] shrink-0" />
        <svg width="15" height="15" viewBox="0 0 15 15" className="ml-[4px] shrink-0">
          <circle cx="7.5" cy="7.5" r="4" fill="none" stroke={s} strokeWidth="3" />
          <path d="M7.5 0v3M7.5 12v3M0 7.5h3M12 7.5h3M2 2l2 2M11 11l2 2M13 2l-2 2M2 13l2-2" stroke={s} strokeWidth="2" />
        </svg>
        <span className="ml-[5px]"><Caret color="#9aa2ad" /></span>
        <Plus size={16} strokeWidth={2.5} color={s} className="ml-[6px] shrink-0" />
        <svg width="15" height="15" viewBox="0 0 15 15" fill="none" className="ml-[6px] shrink-0"><path d="M1 1h5v5H1z" stroke={d} /><circle cx="12" cy="4" r="2.5" stroke={d} /><path d="M4 9l3 5H1z" stroke={d} /></svg>
        <span className="ml-[6px] w-px h-[20px] bg-[#2b323d] shrink-0" />
        <svg width="15" height="13" viewBox="0 0 15 13" fill="none" className="ml-[6px] shrink-0"><path d="M.5.5h14v12H.5z" stroke={s} /><path d="M2 11l3-3M13 2l-3 3" stroke={s} /></svg>
        <svg width="15" height="13" viewBox="0 0 15 13" className="ml-[5px] shrink-0"><path d="M0 0h15v2.5H0zM0 5h15v2.5H0zM0 10h15v2.5H0z" fill={s} /></svg>
      </div>
    </div>
  );
}

function Taskbar() {
  return (
    <div className="h-[40px] flex items-center border-t border-[#7d8590] bg-[linear-gradient(90deg,#eef0f2,#e9f2fa)] text-[#333]">
      <div className="w-[420px] shrink-0 flex items-center pl-[18px]">
        <div className="relative w-[18px] h-[18px] rounded-full bg-[linear-gradient(135deg,#f9b13c,#ee7a1c)] mt-[4px]">
          <span className="absolute left-[8px] top-[-8px] w-[13px] h-[13px] rounded-full bg-[#b3261e] text-white text-[9px] leading-[13px] text-center">1</span>
        </div>
        <div className="ml-[7px] text-[10.5px] leading-[13px]">
          <div className="text-[#222]">57°F</div>
          <div className="text-[#666]">Sunny</div>
        </div>
      </div>
      <svg width="20" height="20" viewBox="0 0 20 20" className="ml-[7px] shrink-0">
        <path d="M0 0h9.5v9.5H0zM10.5 0H20v9.5h-9.5zM0 10.5h9.5V20H0zM10.5 10.5H20V20h-9.5z" fill="#1e9de0" />
      </svg>
      <div className="ml-[11px] w-[182px] h-[25px] rounded-full bg-white/90 flex items-center pl-[10px] text-[12px] text-[#666] relative shrink-0">
        <Search size={14} color="#222" />
        <span className="ml-[6px]">Search</span>
        <svg width="38" height="22" viewBox="0 0 38 22" className="absolute right-[3px] top-[1px]">
          <path d="M2 3l4-2 1 9-3 2z" fill="#7d7f96" />
          <path d="M5 12v9" stroke="#777" />
          <path d="M11 15l9-8 3 1 3-3 11 8c1 2-1 3-3 3l-9-1-4 3H14c-3 0-4-1-3-3z" fill="#3f8fd2" />
          <path d="M20 9l4 3M24 7l4 3" stroke="#8fc3ec" />
        </svg>
      </div>
      <svg width="20" height="20" viewBox="0 0 20 20" className="ml-[11px] shrink-0">
        <path d="M6 1h13v13H6z" fill="#e9e9ea" />
        <path d="M1 6h13v13H1z" fill="#1c1c1c" />
        <path d="M6 6h8v8H6z" fill="#777" />
      </svg>
      <svg width="20" height="20" viewBox="0 0 20 20" className="ml-[16px] shrink-0">
        <circle cx="9" cy="4" r="3" fill="#5b5fc7" />
        <circle cx="16" cy="5" r="2.5" fill="#7b83eb" />
        <path d="M12 9h7v6a4 4 0 0 1-7 2z" fill="#7b83eb" />
        <path d="M4 8h11v9a3 3 0 0 1-3 3H7a3 3 0 0 1-3-3z" fill="#5b5fc7" />
        <path d="M1 9h9v8H1z" fill="#464eb8" />
        <path d="M3 11h5M5.5 11v5" stroke="#fff" />
      </svg>
      <svg width="20" height="18" viewBox="0 0 20 18" className="ml-[17px] shrink-0">
        <path d="M0 1h8l2 2h10v15H0z" fill="#f7c83b" />
        <path d="M7 12h13v6H7z" fill="#2f8fd0" />
      </svg>
      <svg width="20" height="20" viewBox="0 0 20 20" className="ml-[17px] shrink-0">
        <circle cx="10" cy="10" r="10" fill="#e94235" />
        <path d="M10 20a10 10 0 0 1-8.7-15L6 13z" fill="#34a853" />
        <path d="M10 20a10 10 0 0 0 8.7-15H10l4 7z" fill="#fbbc04" />
        <circle cx="10" cy="10" r="4.5" fill="#4285f4" stroke="#fff" />
      </svg>
      <div className="ml-[11px] w-[32px] h-[34px] rounded-[3px] bg-white/70 flex flex-col items-center justify-end pb-[2px] shrink-0">
        <svg width="16" height="18" viewBox="0 0 16 18">
          <path d="M5 0h6l5 18h-5l-.8-3H5.8L5 18H0zM6.8 11h2.400L8 6z" fill="#b3262d" fillRule="evenodd" />
        </svg>
        <span className="mt-[5px] w-[14px] h-[3px] rounded-full bg-[#0f6cbd]" />
      </div>
      <svg width="19" height="20" viewBox="0 0 19 20" className="ml-[11px] shrink-0">
        <path d="M10 1c6 0 9 4 9 8 0 6-5 10-10 10-5 0-9-4-9-9 0-5 4-9 10-9z" fill="#4bb3d8" />
        <circle cx="6" cy="6" r="2" fill="#f4c04e" />
        <circle cx="4" cy="11" r="2" fill="#e0574e" />
        <path d="M9 12l7-9 2 1-6 10z" fill="#8a8f96" />
      </svg>
      <div className="ml-auto flex items-center pr-[16px]">
        <ChevronUp size={15} strokeWidth={1.8} color="#222" />
        <Wifi size={15} color="#222" className="ml-[12px]" />
        <Volume1 size={15} color="#222" className="ml-[3px]" />
        <svg width="14" height="12" viewBox="0 0 14 12" className="ml-[3px]">
          <path d="M1 3h12v8H1z" fill="#222" />
          <path d="M3 0l3 3H2z" fill="#222" />
        </svg>
        <div className="ml-[13px] text-[10.5px] leading-[14px] text-right text-[#333]">
          <div>12:58 PM</div>
          <div>1/8/2026</div>
        </div>
      </div>
    </div>
  );
}

export default function App() {
  return (
    <div className="w-[1280px] h-[720px] overflow-hidden flex flex-col bg-[#1f2630] font-['Lato',sans-serif] tracking-[-0.3px]">
      <TitleBar />
      <Ribbon />
      <DocTabs />
      <div className="h-[3px] bg-[#39414d]" />
      <Canvas />
      <CommandLine />
      <LayoutTabs />
      <StatusBar />
      <Taskbar />
    </div>
  );
}
